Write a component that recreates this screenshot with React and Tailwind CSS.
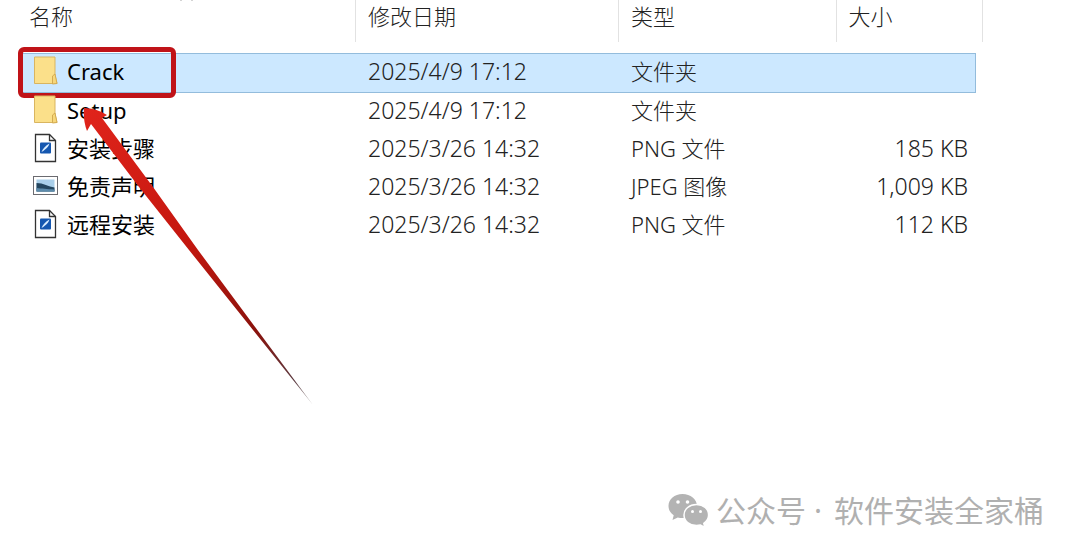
const files = [
  { name: "Crack", icon: "folder", date: "2025/4/9 17:12", type: "文件夹", size: "" },
  { name: "Setup", icon: "folder", date: "2025/4/9 17:12", type: "文件夹", size: "" },
  { name: "安装步骤", icon: "png", date: "2025/3/26 14:32", type: "PNG 文件", size: "185 KB" },
  { name: "免责声明", icon: "jpeg", date: "2025/3/26 14:32", type: "JPEG 图像", size: "1,009 KB" },
  { name: "远程安装", icon: "png", date: "2025/3/26 14:32", type: "PNG 文件", size: "112 KB" },
];

function FolderIcon() {
  return (
    <svg className="h-[30px] w-6 shrink-0" viewBox="0 0 24 30" aria-hidden="true">
      <path d="M.5 1H21v18l2 8.500H.5z" fill="#fbe08a" stroke="#d9b560" />
      <path d="M18.500 28V20l2.500-2 2 9.500z" fill="#f7d77a" stroke="#d3ab52" />
    </svg>
  );
}

function PngIcon() {
  return (
    <svg className="h-[30px] w-6 shrink-0" viewBox="0 0 24 30" aria-hidden="true">
      <path d="M1.500 1.500h14l6 6V28.500h-20z" fill="#fff" stroke="#333" strokeWidth="1.300" />
      <path d="M15.500 1.500v6h6" fill="none" stroke="#333" strokeWidth="1.300" />
      <rect x="6" y="9.500" width="11" height="11" rx="1" fill="#1557b0" />
      <path d="M7.500 19c1-3 4-6.500 8-8.500-1 3-3 5.500-8 8.500z" fill="#d8ecff" />
    </svg>
  );
}

function JpegIcon() {
  return (
    <svg className="h-[30px] w-6 shrink-0 overflow-visible" viewBox="0 0 24 30" aria-hidden="true">
      <rect x="-.5" y="5.500" width="24" height="18" fill="#fff" stroke="#6b6b70" />
      <rect x="2.500" y="8.500" width="18" height="12" fill="#a9cfea" />
      <path d="M2.500 12c7 0 12 3.500 18 4.500v4h-18z" fill="#24465f" />
      <path d="M2.500 17c6 .5 10 1 18 1.500v2h-18z" fill="#5d8bab" />
    </svg>
  );
}

const icons = { folder: FolderIcon, png: PngIcon, jpeg: JpegIcon };

function Row({ file, selected }) {
  const Icon = icons[file.icon];
  const cell = selected
    ? "h-10 border-y border-[#93bcdc] bg-[#cce8ff] px-3 pb-1"
    : "h-[38px] px-3 pb-1";
  return (
    <tr>
      <td className={`${cell} relative`}>
        <div className="flex items-center gap-[9px] pl-[2px] font-normal text-black">
          <Icon />
          <span>{file.name}</span>
        </div>
        {selected && (
          <div className="absolute -top-[7px] -left-[2px] h-[51px] w-[158px] rounded-md border-[5px] border-[#c01318]" />
        )}
      </td>
      <td className={`${cell} text-[23px]`}>{file.date}</td>
      <td className={cell}>{file.type}</td>
      <td className={`${cell} text-right text-[23px] ${selected ? "border-r" : ""}`}>
        <span className="-mr-1">{file.size}</span>
      </td>
      <td />
    </tr>
  );
}

function Header({ children, span, first }) {
  return (
    <th colSpan={span} className="p-0 pb-[11px] text-left font-light">
      <div className={`flex h-[42px] items-center border-r border-[#e2e2e2] pb-[10px] ${first ? "pl-[9px]" : "pl-3"}`}>
        {children}
      </div>
    </th>
  );
}

function WeChatIcon() {
  return (
    <svg className="h-9 w-[42px]" viewBox="0 0 42 36" aria-hidden="true">
      <path d="M14.500 1C6.500 1 .5 6.200.5 13c0 4 2 7 5.200 9.200L4.500 27l5.300-2.600c1.500.4 3 .6 4.700.6C22.500 25 29 19.800 29 13S22.500 1 14.500 1z" fill="#b3b3b3" />
      <path d="M28.500 11.500C21.500 11.500 16 16 16 22s5.500 10.500 12.500 10.500c1.500 0 2.800-.2 4-.5l4.300 2.300-1-4c3-2 4.800-4.900 4.800-8.300 0-6-5.100-10.500-12.100-10.500z" fill="#b3b3b3" stroke="#fff" strokeWidth="1.500" />
      <g fill="#fff">
        <circle cx="10" cy="9" r="1.800" />
        <circle cx="19.500" cy="9" r="1.800" />
        <circle cx="24.500" cy="18.500" r="1.500" />
        <circle cx="32.500" cy="18.500" r="1.500" />
      </g>
    </svg>
  );
}

export default function App() {
  return (
    <main className="relative flex min-h-screen flex-col overflow-hidden bg-white font-['Noto_Sans','Noto_Sans_CJK_SC',sans-serif] text-[22px] leading-8 font-light text-[#222]">
      <div className="pr-[97px] pl-5">
        <table className="w-full table-fixed border-separate border-spacing-0">
          <colgroup>
            <col className="w-[34.9%]" />
            <col className="w-[27.3%]" />
            <col className="w-[22.6%]" />
            <col />
            <col className="w-[7px]" />
          </colgroup>
          <thead>
            <tr>
              <Header first>名称</Header>
              <Header>修改日期</Header>
              <Header>类型</Header>
              <Header span={2}>大小</Header>
            </tr>
          </thead>
          <tbody>
            {files.map((file, i) => (
              <Row key={file.name} file={file} selected={i === 0} />
            ))}
          </tbody>
        </table>
      </div>
      <svg className="pointer-events-none absolute top-0 left-0 h-[420px] w-[330px]" viewBox="0 0 330 420" aria-hidden="true">
        <defs>
          <linearGradient id="shaft" gradientUnits="userSpaceOnUse" x1="85" y1="108" x2="313" y2="405">
            <stop offset="0" stopColor="#e0241b" />
            <stop offset=".45" stopColor="#c4170f" />
            <stop offset=".75" stopColor="#8a120c" />
            <stop offset=".92" stopColor="#5b3a40" />
            <stop offset="1" stopColor="#bbb" />
          </linearGradient>
        </defs>
        <path d="M180 0h2M191 0h2" stroke="#aaa" />
        <path d="M84 108Q96 108 107 115L102 118 153 187 198 250 313 405 189 250 139 187 91 124 87 131Q83 121 84 108z" fill="url(#shaft)" />
      </svg>
      <footer className="mt-auto flex items-center justify-end pr-9 pb-6 text-[30px] leading-10 text-[#b0b0b0]">
        <WeChatIcon />
        <span className="ml-[6px] font-normal">公众号</span>
        <span className="mr-3 ml-2 font-normal">·</span>
        <span className="font-normal">软件安装全家桶</span>
      </footer>
    </main>
  );
}
